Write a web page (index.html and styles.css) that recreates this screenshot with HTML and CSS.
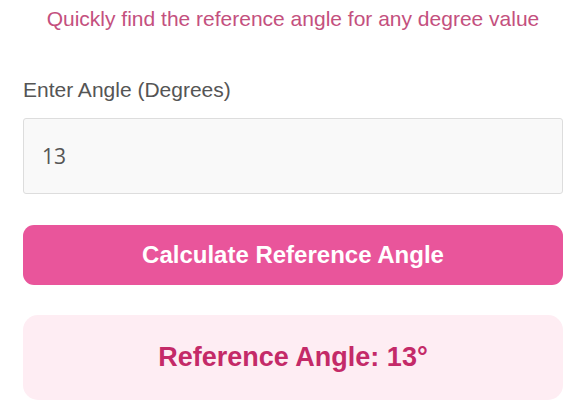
FILE: index.html
```html
<!DOCTYPE html>
<html>
<head>
	<title>Reference Angle Calculator</title>
	<link rel="stylesheet" href="styles.css">
</head>
<body>
	<div class="container">
		<p class="subtitle">Quickly find the reference angle for any degree value</p>

		<div class="field">
			<label for="angle">Enter Angle (Degrees)</label>
			<input type="number" id="angle" name="angle" value="13">
		</div>

		<button class="calc" onclick="calculate()">Calculate Reference Angle</button>

		<div class="result" id="result">Reference Angle: 13°</div>
	</div>

	<script>
		function calculate() {
			var deg = parseFloat(document.getElementById("angle").value);
			if (isNaN(deg)) return;
			var a = ((deg % 360) + 360) % 360;
			var ref;
			if (a <= 90) ref = a;
			else if (a <= 180) ref = 180 - a;
			else if (a <= 270) ref = a - 180;
			else ref = 360 - a;
			document.getElementById("result").innerHTML = "Reference Angle: " + ref + "°";
		}
	</script>
</body>
</html>
```

FILE: styles.css
```css
body {
	margin: 0;
	background: #fff;
	font-family: "Liberation Sans", Arial, sans-serif;
}

.container {
	width: 540px;
	margin: 0 auto;
	padding-top: 7px;
}

.subtitle {
	margin: 0;
	text-align: center;
	color: #c4507e;
	font-size: 21px;
	line-height: 24px;
}

.field {
	margin-top: 47px;
}

.field label {
	display: block;
	color: #555;
	font-size: 21px;
	line-height: 24px;
	margin-bottom: 16px;
}

.field input {
	box-sizing: border-box;
	width: 100%;
	height: 76px;
	padding: 0 18px;
	border: 1px solid #ddd;
	border-radius: 3px;
	background: #f9f9f9;
	font-family: "Open Sans", sans-serif;
	font-size: 21px;
	color: #555;
	outline: none;
}

.calc {
	display: block;
	width: 100%;
	height: 60px;
	margin-top: 31px;
	border: none;
	border-radius: 11px;
	background: #e9559b;
	color: #fff;
	font-family: "Liberation Sans", Arial, sans-serif;
	font-size: 24px;
	font-weight: bold;
	cursor: pointer;
}

.result {
	margin-top: 30px;
	height: 85px;
	border-radius: 15px;
	background: #feedf3;
	color: #c42a68;
	font-size: 27px;
	font-weight: bold;
	display: flex;
	align-items: center;
	justify-content: center;
}
```
